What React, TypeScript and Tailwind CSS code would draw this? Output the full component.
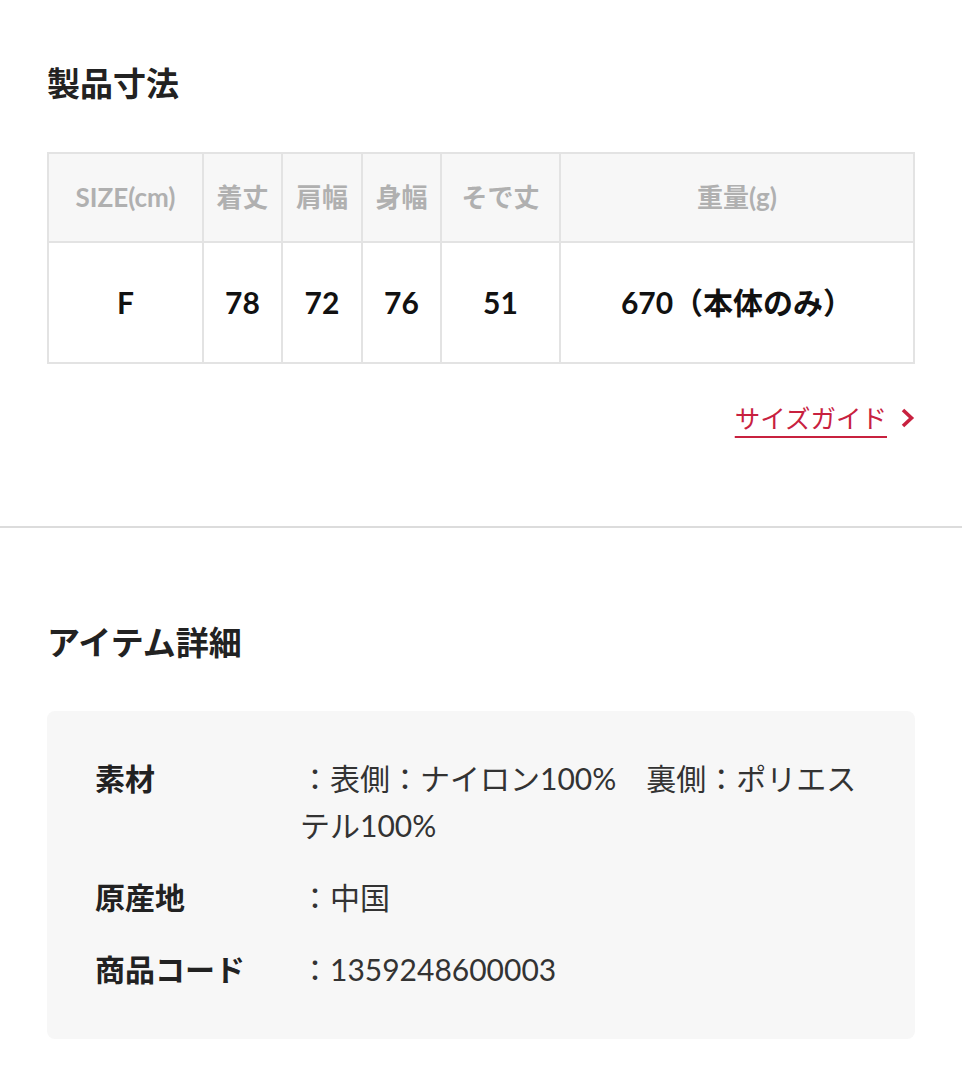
const FONT = "font-['Lato','Noto_Sans_CJK_JP',sans-serif]";

const headers = ["SIZE(cm)", "着丈", "肩幅", "身幅", "そで丈", "重量(g)"];
const values = ["F", "78", "72", "76", "51", "670（本体のみ）"];
const widths = ["w-[155px]", "w-[79px]", "w-[80px]", "w-[79px]", "w-[119px]", ""];

const details = [
  { label: "素材", value: "：表側：ナイロン100%　裏側：ポリエステル100%" },
  { label: "原産地", value: "：中国" },
  { label: "商品コード", value: "：1359248600003" },
];

const App = () => {
  return (
    <div className={`${FONT} bg-white w-[962px] min-h-[1080px] text-[#222]`}>
      <section className="px-[47px] pt-[60px] pb-[92px]">
        <h2 className="text-[33px] leading-[46px] font-bold text-[#222]">製品寸法</h2>

        <table className="mt-[46px] w-full border-collapse table-fixed">
          <thead>
            <tr className="h-[89px] bg-[#f7f7f7]">
              {headers.map((h, i) => (
                <th
                  key={h}
                  className={`${widths[i]} border-2 border-[#e3e3e3] text-[26px] font-bold text-[#b0b0b0] text-center`}
                >
                  {h}
                </th>
              ))}
            </tr>
          </thead>
          <tbody>
            <tr className="h-[121px]">
              {values.map((v, i) => (
                <td
                  key={i}
                  className="border-2 border-[#e3e3e3] text-[30px] font-bold text-[#111] text-center"
                >
                  {v}
                </td>
              ))}
            </tr>
          </tbody>
        </table>

        <div className="mt-[38px] flex justify-end items-center">
          <a className="text-[25.5px] leading-[32px] text-[#c8213f] underline decoration-2 underline-offset-[8px]">
            サイズガイド
          </a>
          <svg width="15" height="22" viewBox="0 0 15 22" className="ml-[13px]">
            <path d="M3 3 L11.5 11 L3 19" fill="none" stroke="#c8213f" strokeWidth="3.6" />
          </svg>
        </div>
      </section>

      <div className="h-[2px] bg-[#dcdcdc]" />

      <section className="px-[47px] pt-[91px] pb-[43px]">
        <h2 className="text-[33px] leading-[46px] font-bold text-[#222]">アイテム詳細</h2>

        <div className="mt-[46px] bg-[#f7f7f7] rounded-[8px] pl-[48px] pr-[48px] pt-[44px] pb-[46px] flex flex-col gap-[25px]">
          {details.map((d) => (
            <div key={d.label} className="flex text-[30px] leading-[47px]">
              <div className="w-[205px] shrink-0 font-bold text-[#222]">{d.label}</div>
              <div className="flex-1 text-[#333]">{d.value}</div>
            </div>
          ))}
        </div>
      </section>
    </div>
  );
};

export default App;
